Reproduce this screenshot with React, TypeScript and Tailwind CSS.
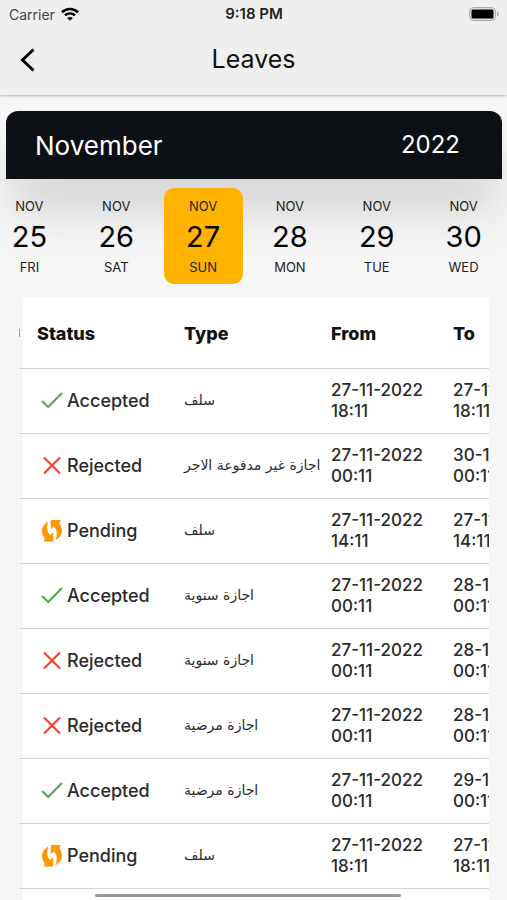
import React from 'react';

type Status = 'Accepted' | 'Rejected' | 'Pending';

interface Leave {
  status: Status;
  type: string;
  from: [string, string];
  to: [string, string];
}

const days = [
  { date: 25, name: 'FRI' },
  { date: 26, name: 'SAT' },
  { date: 27, name: 'SUN' },
  { date: 28, name: 'MON' },
  { date: 29, name: 'TUE' },
  { date: 30, name: 'WED' },
];

const leaves: Leave[] = [
  { status: 'Accepted', type: 'سلف', from: ['27-11-2022', '18:11'], to: ['27-11-2022', '18:11'] },
  { status: 'Rejected', type: 'اجازة غير مدفوعة الاجر', from: ['27-11-2022', '00:11'], to: ['30-11-2022', '00:11'] },
  { status: 'Pending', type: 'سلف', from: ['27-11-2022', '14:11'], to: ['27-11-2022', '14:11'] },
  { status: 'Accepted', type: 'اجازة سنوية', from: ['27-11-2022', '00:11'], to: ['28-11-2022', '00:11'] },
  { status: 'Rejected', type: 'اجازة سنوية', from: ['27-11-2022', '00:11'], to: ['28-11-2022', '00:11'] },
  { status: 'Rejected', type: 'اجازة مرضية', from: ['27-11-2022', '00:11'], to: ['28-11-2022', '00:11'] },
  { status: 'Accepted', type: 'اجازة مرضية', from: ['27-11-2022', '00:11'], to: ['29-11-2022', '00:11'] },
  { status: 'Pending', type: 'سلف', from: ['27-11-2022', '18:11'], to: ['27-11-2022', '18:11'] },
];

const StatusIcon: React.FC<{ status: Status }> = ({ status }) => {
  if (status === 'Accepted') {
    return (
      <svg className="h-6 w-6 shrink-0" viewBox="0 0 24 24" fill="none" stroke="#4caf50" strokeWidth="2.2">
        <path d="M2 12 8.2 18 22 4" />
      </svg>
    );
  }
  if (status === 'Rejected') {
    return (
      <svg className="h-6 w-6 shrink-0" viewBox="0 0 24 24" fill="none" stroke="#f44336" strokeWidth="2.2">
        <path d="M4 3.500 20 19.500M20 3.500 4 19.500" />
      </svg>
    );
  }
  return (
    <svg className="h-6 w-6 shrink-0" viewBox="0 0 24 24" fill="#ff9800">
      <path d="M8.500 2.500C4.500 4.500 2 8 2 12c0 2.900 1.100 5.200 2.700 7L4 22.500h9.200V13.300L10.300 16C8.300 14.300 7.200 12 7.200 9c0-2.600.5-4.700 1.300-6.500z" />
      <path d="M15.500 21c4-2 6.500-5.500 6.500-9.500 0-2.900-1.100-5.200-2.700-7L20.500 1H10.800v9.200l2.900-2.700c2 1.700 3.100 4 3.100 7 0 2.600-.5 4.700-1.300 6.500z" />
    </svg>
  );
};

const StatusBar = () => (
  <div className="grid h-7 grid-cols-3 items-center pr-2 pl-[9px] text-[14px]">
    <div className="flex items-center gap-[6px] text-[#444]">
      <span>Carrier</span>
      <svg className="h-[14px] w-[18px]" viewBox="0 0 18 14" fill="none" stroke="#000" strokeWidth="2.600">
        <path d="M1 5.200C5.500.9 12.500.9 17 5.200" />
        <path d="M4 8.400c2.900-2.600 7.100-2.600 10 0" />
        <path d="M9 13.800 6.200 11c1.600-1.400 4-1.400 5.600 0z" fill="#000" stroke="none" />
      </svg>
    </div>
    <span className="text-center text-[15px] font-semibold text-[#222]">9:18 PM</span>
    <svg className="h-[14px] w-[30px] justify-self-end" viewBox="0 0 30 14">
      <rect x="0.500" y="0.500" width="26" height="13" rx="4" fill="#ddd" stroke="#aaa" />
      <rect x="2.500" y="2.500" width="22" height="9" rx="1.500" fill="#000" />
      <path d="M28 4.500c2.400 1 2.400 4 0 5z" fill="#aaa" />
    </svg>
  </div>
);

const Calendar = () => (
  <section className="pt-4">
    <div className="mr-[5px] ml-[6px] flex h-[68px] items-center justify-between rounded-t-xl bg-[#0d1014] pr-[42px] pl-[29px] text-white shadow-[0_36px_48px_-4px_rgba(0,0,0,0.14)]">
      <h2 className="text-[26px]">November</h2>
      <span className="text-[24px]">2022</span>
    </div>
    <div className="relative -ml-[14px] grid grid-cols-6 pt-[9px]">
      {days.map((day) => (
        <button
          key={day.date}
          className={`mx-1 flex h-24 flex-col items-center rounded-[10px] pt-2 text-[13px] leading-[20px] text-[#222] ${day.date === 27 ? 'bg-[#ffb300]' : ''}`}
        >
          <span>NOV</span>
          <span className="text-[29px] leading-[41px] text-black">{day.date}</span>
          <span>{day.name}</span>
        </button>
      ))}
    </div>
  </section>
);

const DateCell: React.FC<{ value: [string, string] }> = ({ value }) => (
  <td className="whitespace-nowrap">
    <span className="block">{value[0]}</span>
    <span className="block">{value[1]}</span>
  </td>
);

const LeavesTable = () => (
  <div className="mt-[14px] mr-[18px] ml-[19px] flex-1 overflow-hidden bg-[linear-gradient(to_right,#f6f6f6_4px,#fff_4px)]">
    <table className="w-[524px] table-fixed text-left text-[17px] leading-[21px] font-medium text-[#2b2b2b]">
      <thead>
        <tr className="h-[70px] border-b border-[#d4d4d4] text-[18px] text-[#111]">
          <th className="w-[18px]">
            <div className="h-2 w-px bg-[#999]" />
          </th>
          <th className="w-[147px] pt-[2px] font-extrabold">Status</th>
          <th className="w-[147px] pt-[2px] font-extrabold">Type</th>
          <th className="w-[122px] pt-[2px] font-extrabold">From</th>
          <th className="pt-[2px] font-extrabold">To</th>
        </tr>
      </thead>
      <tbody>
        {leaves.map((leave, i) => (
          <tr key={i} className="h-[65px] border-b border-[#d4d4d4]">
            <td></td>
            <td>
              <div className="flex items-center gap-[3px] pl-[3px] text-[18px]">
                <StatusIcon status={leave.status} />
                <span>{leave.status}</span>
              </div>
            </td>
            <td className="font-['DejaVu_Sans',sans-serif] text-[14px] font-normal whitespace-nowrap">
              <span lang="ar" dir="rtl">{leave.type}</span>
            </td>
            <DateCell value={leave.from} />
            <DateCell value={leave.to} />
          </tr>
        ))}
      </tbody>
    </table>
  </div>
);

export default function App() {
  return (
    <div className="relative flex h-screen flex-col overflow-hidden bg-[#f6f6f6] font-['Inter',sans-serif]">
      <header className="h-[95px] shrink-0 bg-[#efefef] shadow-[0_0_3px_rgba(0,0,0,0.45)]">
        <StatusBar />
        <div className="grid h-16 grid-cols-[1fr_auto_1fr] items-center">
          <button aria-label="Back" className="ml-4 w-6">
            <svg className="h-6 w-6" viewBox="0 0 24 24" fill="none" stroke="#000" strokeWidth="3">
              <path d="M17.500 1.500 6.500 12l11 10.500" />
            </svg>
          </button>
          <h1 className="text-[25px] text-[#111]">Leaves</h1>
        </div>
      </header>
      <Calendar />
      <LeavesTable />
      <div className="absolute right-[106px] bottom-[3px] left-[95px] h-[3px] rounded-full bg-[#999]" />
    </div>
  );
}
